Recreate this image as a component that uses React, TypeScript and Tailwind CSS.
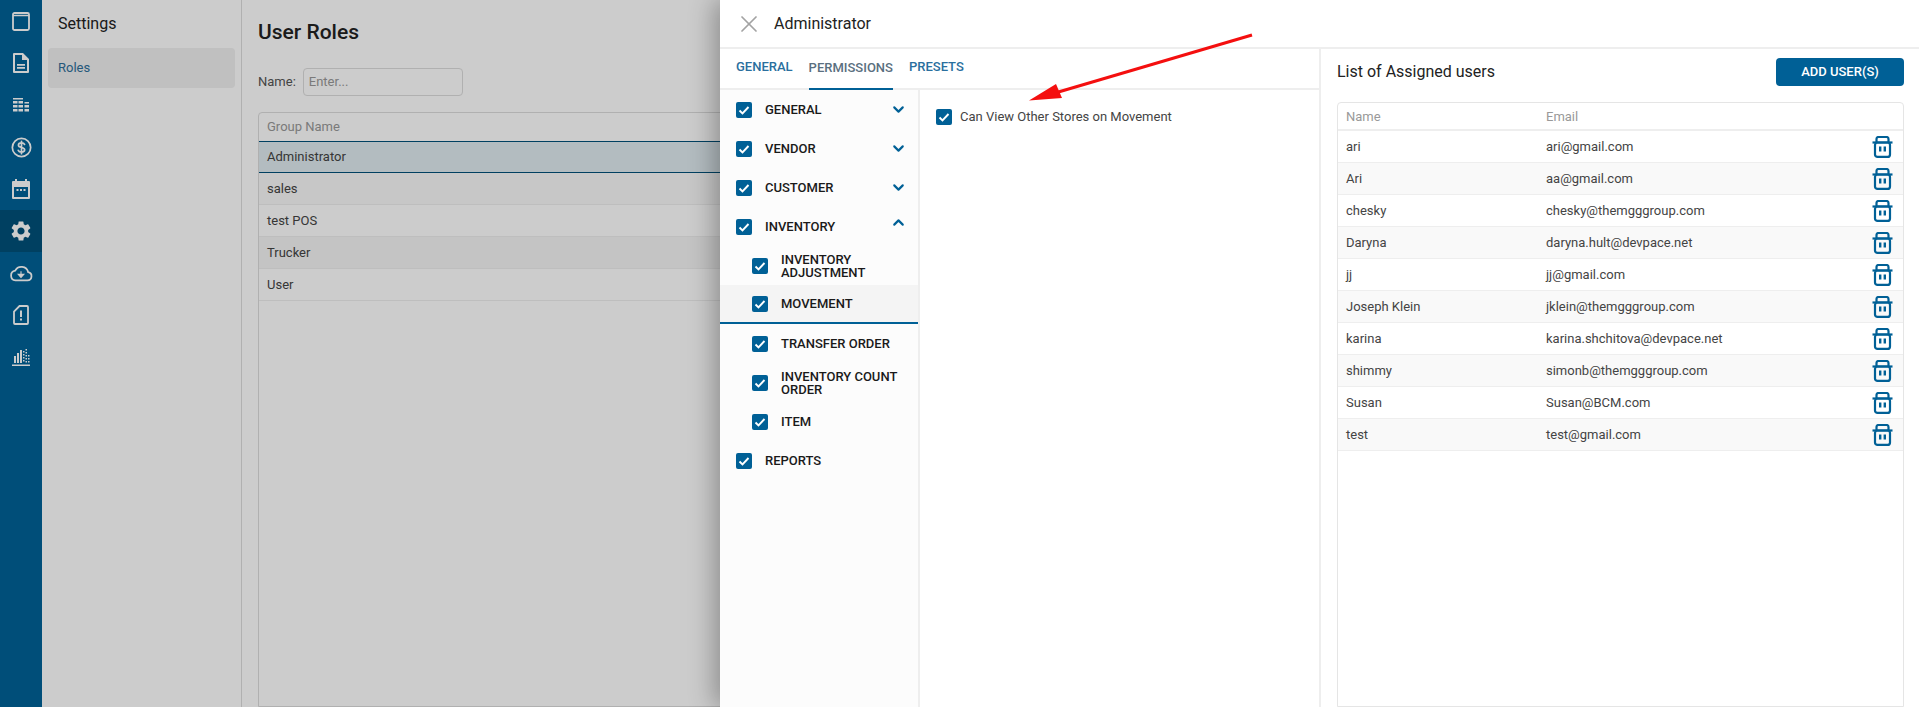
import { ChevronDown, ChevronUp, X } from 'lucide-react';
import { MdSettings } from 'react-icons/md';

const font = { fontFamily: 'Roboto, sans-serif' };

const sideIcons = [
  <svg key="box" width="18" height="19" viewBox="0 0 18 19" fill="none" stroke="currentColor" strokeWidth="1.800"><rect x="1" y="1" width="16" height="17" rx="1.500" /><path d="M1 3.500h16" strokeWidth="1.500" /></svg>,
  <svg key="doc" width="18" height="20" viewBox="0 0 18 20" fill="currentColor"><path fillRule="evenodd" d="M2 0h9l6 6v13a1 1 0 0 1-1 1H2a1 1 0 0 1-1-1V1a1 1 0 0 1 1-1Zm1 2v16h12V7h-5V2H3Zm2 9h8v1.700H5V11Zm0 3h8v1.700H5V14Z" /></svg>,
  <svg key="table" width="18" height="15" viewBox="0 0 18 15" fill="currentColor"><path d="M1 0h10v1.500H1zM1 3h4.500v2.500H1zM6.500 3H11v2.500H6.500zM12.500 4H17v1.500h-4.500zM1 7h4.500v2.500H1zM6.500 7H11v2.500H6.500zM12.500 7H17v2.500h-4.500zM1 11h4.500v2.500H1zM6.500 11H11v2.500H6.500zM12.500 11H17v2.500h-4.500z" /></svg>,
  <svg key="dollar" width="21" height="21" viewBox="0 0 22 22" fill="none" stroke="currentColor" strokeWidth="1.800" strokeLinecap="round"><circle cx="11" cy="11" r="9.600" /><path d="M14.200 7.800c-.5-1-1.700-1.600-3.200-1.600-1.900 0-3.200 1-3.200 2.400 0 3.200 6.500 1.600 6.500 4.800 0 1.400-1.400 2.400-3.300 2.400-1.600 0-2.900-.7-3.400-1.800M11 4.500v13" /></svg>,
  <svg key="calendar" width="18" height="20" viewBox="0 0 18 20" fill="currentColor"><path fillRule="evenodd" d="M3 0h2v2h8V0h2v2h2a1 1 0 0 1 1 1v16a1 1 0 0 1-1 1H1a1 1 0 0 1-1-1V3a1 1 0 0 1 1-1h2V0ZM2 8v10h14V8H2Zm2.500 2h2v2h-2v-2Zm3.500 0h2v2H8v-2Zm3.500 0h2v2h-2v-2Z" /></svg>,
  <MdSettings key="gear" size={24} />,
  <svg key="cloud" width="24" height="17" viewBox="0 0 26 18" fill="none" stroke="currentColor" strokeWidth="1.900"><path d="M7 16.500h13a4.500 4.500 0 0 0 .8-8.900A7.500 7.500 0 0 0 6.700 6 5.300 5.300 0 0 0 7 16.500Z" /><path d="M13 6.500v4M10 10h6l-3 3.200L10 10Z" fill="currentColor" strokeWidth="1.200" /></svg>,
  <svg key="card" width="16" height="20" viewBox="0 0 16 20" fill="none" stroke="currentColor" strokeWidth="1.800"><path d="M6.500 1H14a1 1 0 0 1 1 1v16a1 1 0 0 1-1 1H2a1 1 0 0 1-1-1V6.500L6.500 1Z" /><path d="M8 5.500v6.500M8 13.500v2" strokeWidth="2" /></svg>,
  <svg key="chart" width="18" height="18" viewBox="0 0 18 18" fill="currentColor"><path d="M2 8h2v7H2zM5 5h2v10H5zM8 2h2v13H8zM11 3h1.500v1.500H11zM11 6h1.500v1.500H11zM11 9h1.500v1.500H11zM11 12h1.500v1.500H11zM13.500 1H15v1.500h-1.500zM13.500 4H15v1.500h-1.500zM13.500 7H15v1.500h-1.500zM13.500 10H15v1.500h-1.500zM13.500 13H15v1.500h-1.500zM16 7h1.500v1.500H16zM16 10h1.500v1.500H16zM16 13h1.500v1.500H16zM0 16.500h18V18H0z" /></svg>,
];

const roles = [
  { name: 'Administrator', cls: 'bg-[#e0ebf0] border-y border-[#00507a] h-8' },
  { name: 'sales', cls: 'bg-[#f9f9f9] border-b border-[#eeeeee] h-8' },
  { name: 'test POS', cls: 'bg-white border-b border-[#eeeeee] h-8' },
  { name: 'Trucker', cls: 'bg-[#f5f5f5] border-b border-[#eeeeee] h-8' },
  { name: 'User', cls: 'bg-white border-b border-[#eeeeee] h-8' },
];

const users = [
  ['ari', 'ari@gmail.com'],
  ['Ari', 'aa@gmail.com'],
  ['chesky', 'chesky@themgggroup.com'],
  ['Daryna', 'daryna.hult@devpace.net'],
  ['jj', 'jj@gmail.com'],
  ['Joseph Klein', 'jklein@themgggroup.com'],
  ['karina', 'karina.shchitova@devpace.net'],
  ['shimmy', 'simonb@themgggroup.com'],
  ['Susan', 'Susan@BCM.com'],
  ['test', 'test@gmail.com'],
];

function Check() {
  return (
    <span className="flex h-4 w-4 shrink-0 items-center justify-center rounded-[2px] bg-[#006096]">
      <svg width="12" height="12" viewBox="0 0 12 12" fill="none" stroke="white" strokeWidth="1.900">
        <path d="M1.500 6.500 4.500 9.500 10.500 3" />
      </svg>
    </span>
  );
}

function Trash() {
  return (
    <svg width="21" height="22" viewBox="0 0 21 22" fill="none" stroke="#006096">
      <path d="M4.500 6V3a2 2 0 0 1 2-2h8a2 2 0 0 1 2 2v3" strokeWidth="2.200" />
      <path d="M0.500 6.500h20" strokeWidth="2.200" />
      <rect x="3" y="6.500" width="15" height="14.400" rx="2.500" strokeWidth="2.200" />
      <path d="M8.200 10.500v5M12.800 10.500v5" strokeWidth="2.400" />
    </svg>
  );
}

function PermRow({ label, sub, open, active }: { label: string; sub?: boolean; open?: boolean | null; active?: boolean }) {
  return (
    <div className={`flex h-[39px] items-center text-[13px] font-medium leading-[13px] text-[#1a1a1a] ${sub ? 'pl-4' : ''} ${active ? 'border-b-2 border-[#006096] bg-[#f4f4f4]' : ''}`}>
      <span className="ml-4"><Check /></span>
      <span className="ml-[13px] flex-1">{label}</span>
      {open === false && <ChevronDown size={17} strokeWidth={3} className="mr-[11px] text-[#006096]" />}
      {open === true && <ChevronUp size={17} strokeWidth={3} className="mr-[11px] -mt-2 text-[#006096]" />}
    </div>
  );
}

export default function App() {
  return (
    <div className="relative flex h-screen w-full overflow-hidden bg-white" style={font}>
      <aside className="flex w-[42px] shrink-0 flex-col bg-[#006298] text-white">
        {sideIcons.map((icon, i) => (
          <div key={i} className={`flex h-[42px] items-center justify-center ${i === 5 ? 'bg-[#00507a]' : ''}`}>
            {icon}
          </div>
        ))}
      </aside>

      <div className="w-[200px] shrink-0 border-r border-[#dcdcdc] px-1.5">
        <div className="flex h-12 items-center px-[10px] text-[16px] text-[#222]">Settings</div>
        <div className="flex h-10 items-center rounded bg-[#f0f0f0] px-[10px] text-[13px] text-[#2f6f9a]">Roles</div>
      </div>

      <main className="flex flex-1 flex-col pl-4">
        <h1 className="flex h-[68px] items-center pb-0.5 text-[21px] font-medium text-[#222]">User Roles</h1>
        <div className="flex h-7 items-center gap-[7px] text-[13px] text-[#555]">
          <span>Name:</span>
          <div className="flex h-7 w-40 items-center rounded border border-[#dddddd] px-[5px] text-[13px] text-[#999]">Enter...</div>
        </div>
        <div className="mt-4 flex-1 rounded-t border border-[#dddddd] text-[13px] text-[#444]">
          <div className="flex h-7 items-center px-2 text-[#999]">Group Name</div>
          {roles.map((r) => (
            <div key={r.name} className={`flex items-center px-2 ${r.cls}`}>{r.name}</div>
          ))}
        </div>
      </main>

      <div className="absolute inset-0 bg-black/20" />

      <section className="absolute inset-y-0 right-0 flex w-[1199px] flex-col bg-white shadow-[-6px_0_24px_rgba(0,0,0,0.3)]">
        <header className="flex h-[49px] shrink-0 items-center border-b-2 border-[#eeeeee] pl-[15px]">
          <X size={28} strokeWidth={1.500} className="text-[#a3a3a3]" />
          <span className="ml-[11px] text-[16px] text-[#222]">Administrator</span>
        </header>

        <div className="flex flex-1">
          <div className="flex w-[601px] shrink-0 flex-col border-r-2 border-[#eeeeee]">
            <nav className="flex h-[41px] shrink-0 items-stretch gap-4 border-b-2 border-[#eeeeee] pl-4 text-[13px] font-medium text-[#2a6f9e]">
              <span className="flex items-center pb-[3px]">GENERAL</span>
              <span className="-mb-0.5 flex items-center border-b-2 border-[#006096] pb-px text-[#5a6f80]">PERMISSIONS</span>
              <span className="flex items-center pb-[3px]">PRESETS</span>
            </nav>
            <div className="flex flex-1">
              <div className="w-[200px] shrink-0 border-r-2 border-[#eeeeee] bg-[#fcfcfc]">
                <PermRow label="GENERAL" open={false} />
                <PermRow label="VENDOR" open={false} />
                <PermRow label="CUSTOMER" open={false} />
                <PermRow label="INVENTORY" open={true} />
                <PermRow label="INVENTORY ADJUSTMENT" sub />
                <PermRow label="MOVEMENT" sub active />
                <PermRow label="TRANSFER ORDER" sub />
                <PermRow label="INVENTORY COUNT ORDER" sub />
                <PermRow label="ITEM" sub />
                <PermRow label="REPORTS" />
              </div>
              <div className="flex-1 pl-4 pt-[19px]">
                <div className="flex items-center gap-2 text-[13px] leading-4 text-[#444]">
                  <Check />
                  <span>Can View Other Stores on Movement</span>
                </div>
              </div>
            </div>
          </div>

          <div className="flex flex-1 flex-col pl-4 pr-[15px]">
            <div className="mb-[7px] flex h-[46px] shrink-0 items-center justify-between">
              <h2 className="text-[16px] text-[#222]">List of Assigned users</h2>
              <button className="h-7 w-32 rounded bg-[#006096] text-[13px] font-medium text-white">ADD USER(S)</button>
            </div>
            <div className="flex-1 rounded-t border border-[#e5e5e5] text-[13px] text-[#444]">
              <div className="flex h-7 items-center border-b-2 border-[#eeeeee] px-2 pt-0.5 text-[#999]">
                <span className="w-[200px]">Name</span>
                <span>Email</span>
              </div>
              {users.map(([name, email], i) => (
                <div key={email} className={`flex h-8 items-center border-b border-[#eeeeee] pl-2 pr-2.5 ${i % 2 ? 'bg-[#f9f9f9]' : 'bg-white'}`}>
                  <span className="w-[200px]">{name}</span>
                  <span className="flex-1">{email}</span>
                  <Trash />
                </div>
              ))}
            </div>
          </div>
        </div>
      </section>

      <svg className="pointer-events-none absolute left-[1020px] top-[30px]" width="240" height="80" viewBox="0 0 240 80">
        <path d="M232 5 35 63" stroke="#f40f0f" strokeWidth="3" />
        <path d="M9 70.500 36 54l6 14Z" fill="#f40f0f" />
      </svg>
    </div>
  );
}
